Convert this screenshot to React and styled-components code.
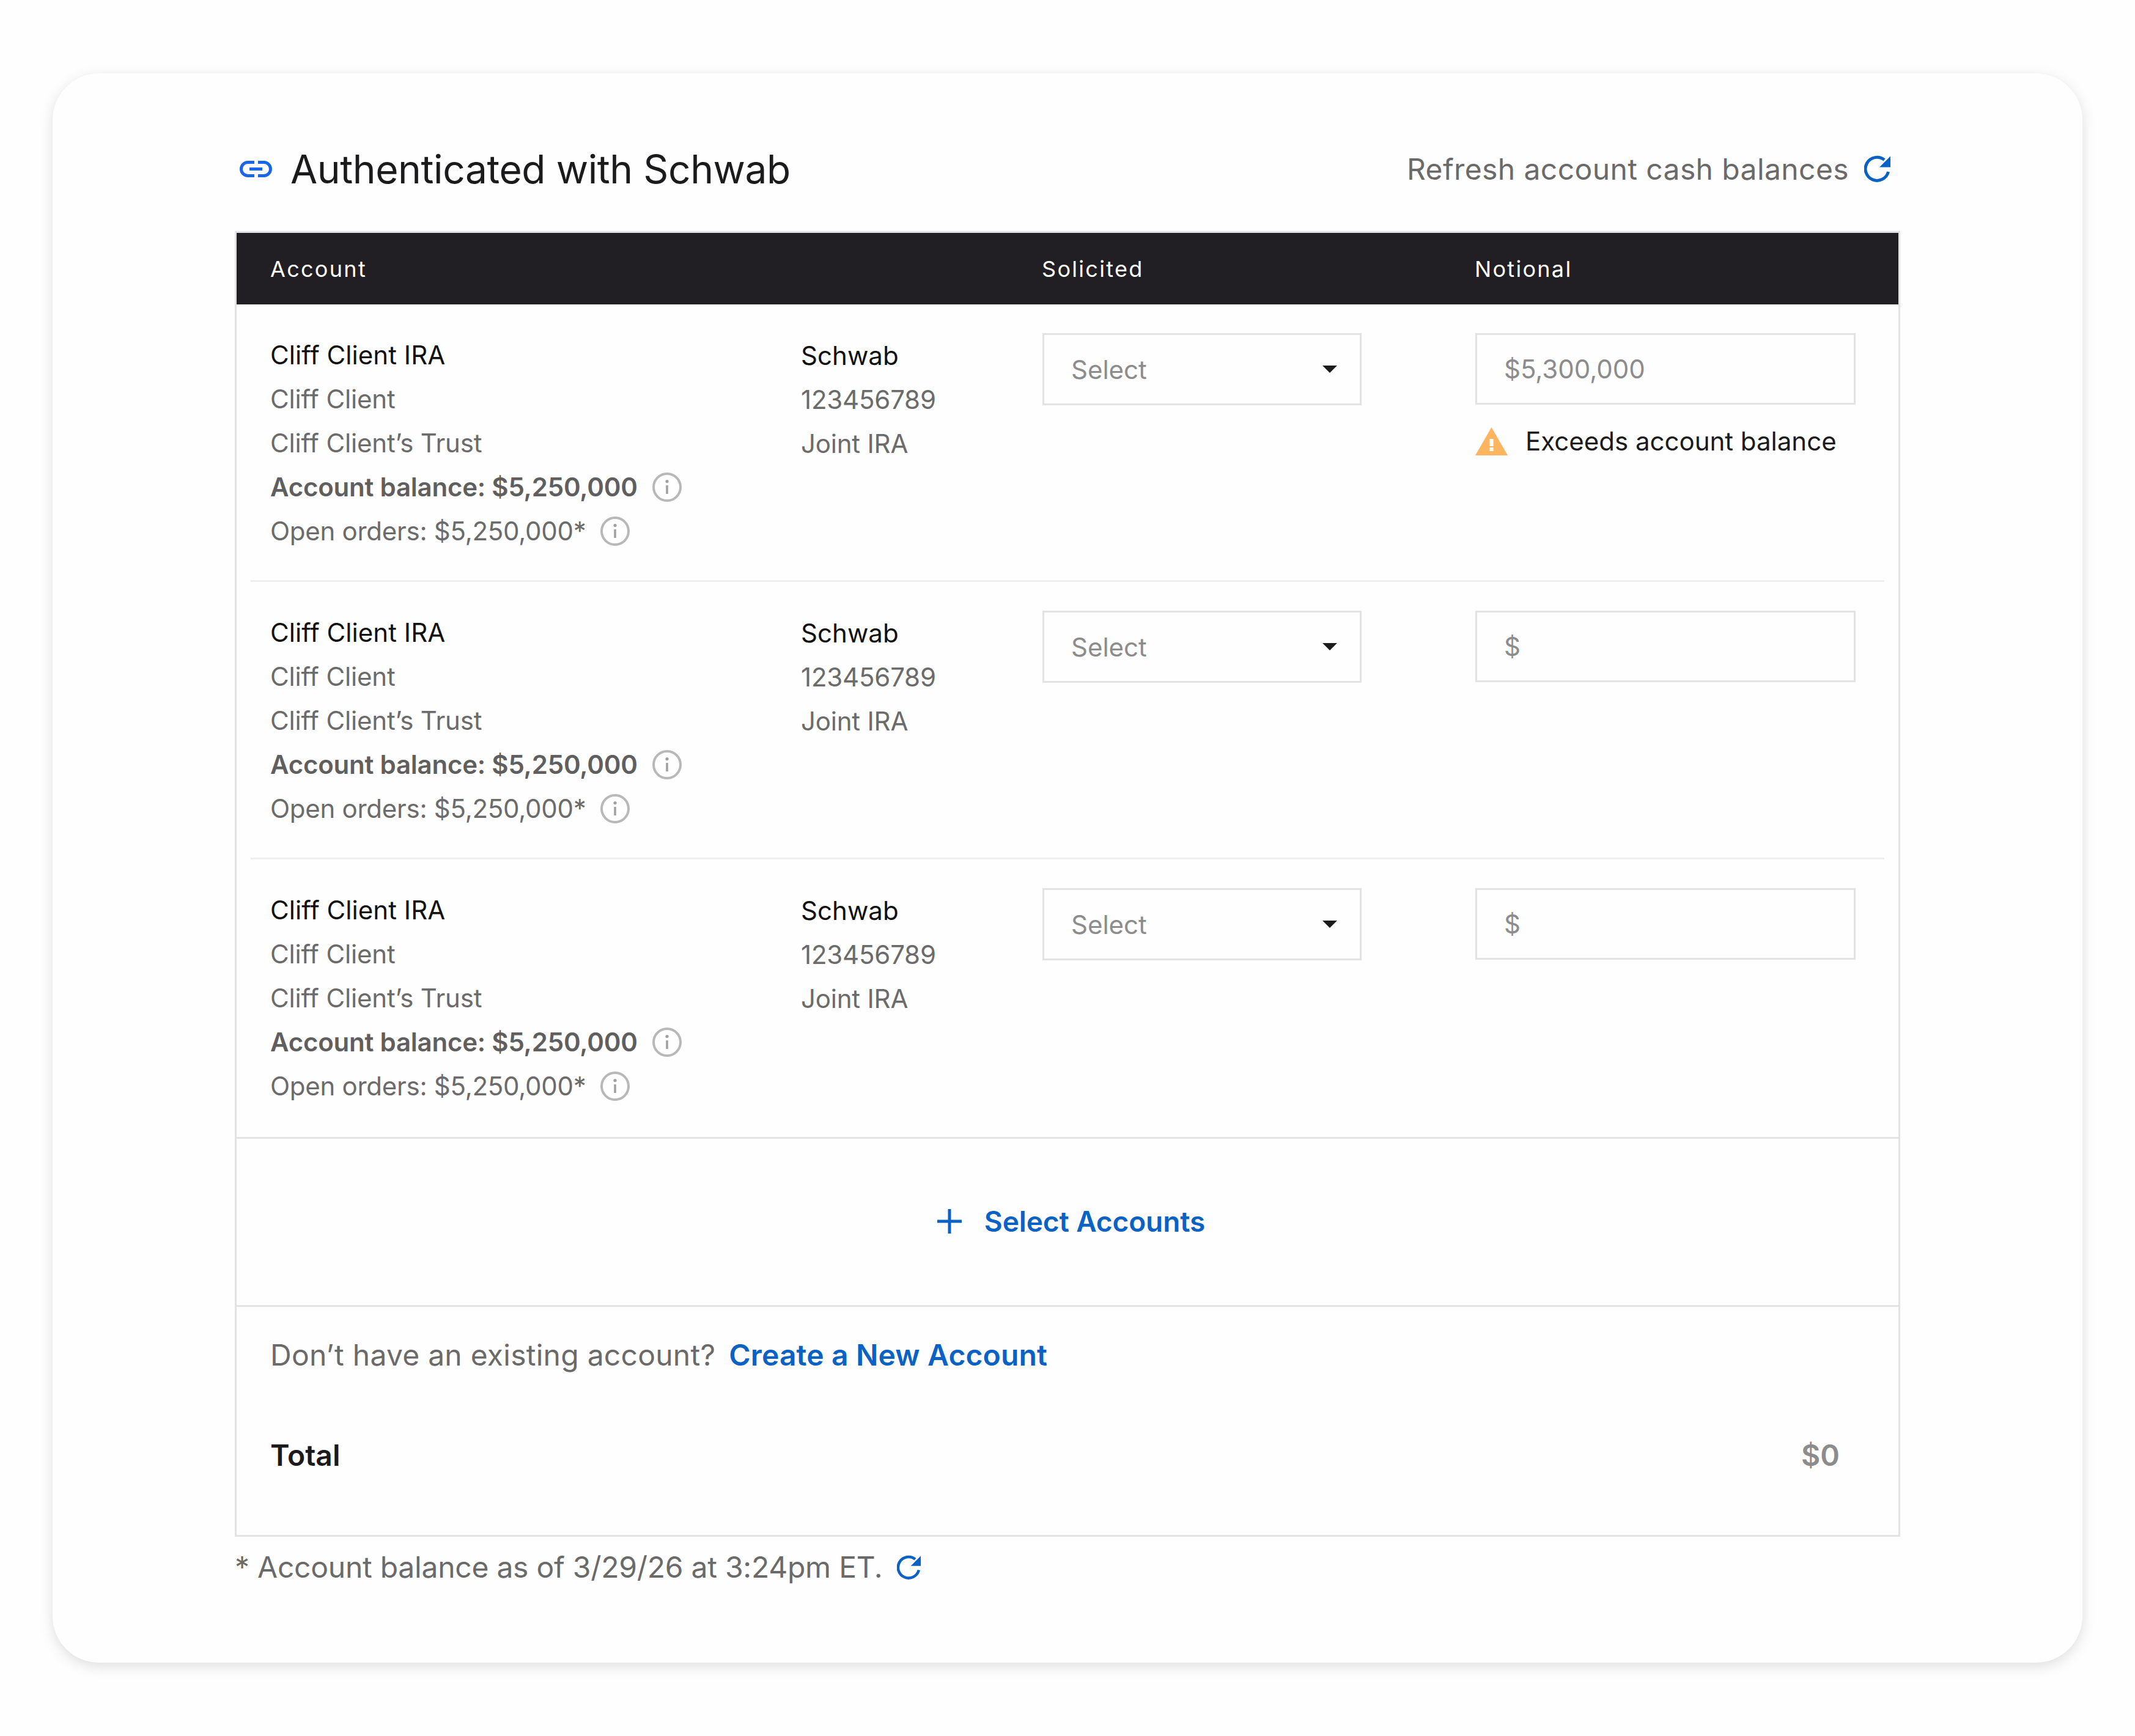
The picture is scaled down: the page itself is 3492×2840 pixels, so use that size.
import styled, { createGlobalStyle } from "styled-components";

const GlobalStyle = createGlobalStyle`
  html, body {
    margin: 0;
    padding: 0;
    background: #fefefe;
  }
  * {
    box-sizing: border-box;
  }
  body {
    font-family: Inter, "Liberation Sans", sans-serif;
  }
`;

const BLUE = "#0a62c4";

const rows = [
  { notional: "$5,300,000", warning: true },
  { notional: "$" },
  { notional: "$" },
];

const LinkIcon = () => (
  <svg width="53" height="27" viewBox="0 0 53 27" fill="none" stroke="#1a66e8" strokeWidth="5">
    <path d="M24 2.5H13.5a11 11 0 0 0 0 22H24" />
    <path d="M30 2.5H39.5a11 11 0 0 1 0 22H30" />
    <path d="M16 13.5H37" />
  </svg>
);

const RefreshIcon = ({ size = 44 }) => (
  <svg width={size} height={size} viewBox="0 0 44 42" fill="none">
    <path d="M33 6.5A19 19 0 1 0 39.5 26" stroke={BLUE} strokeWidth="5" />
    <path d="M43 .5V18.5H25Z" fill={BLUE} />
  </svg>
);

const InfoIcon = () => (
  <svg width="48" height="48" viewBox="0 0 48 48" fill="none">
    <circle cx="24" cy="24" r="22" stroke="#b8b8b8" strokeWidth="4" />
    <circle cx="24" cy="14.5" r="2.6" fill="#a0a0a0" />
    <path d="M24 21V35" stroke="#a0a0a0" strokeWidth="3.6" />
  </svg>
);

const WarningIcon = () => (
  <svg width="53" height="46" viewBox="0 0 53 46">
    <path d="M26.5 0L53 46H0Z" fill="#ffb45f" />
    <path d="M23.5 19h6v12h-6zM23.5 33h6v6h-6z" fill="#fff" />
  </svg>
);

const PlusIcon = () => (
  <svg width="40" height="40" viewBox="0 0 40 40" fill="none" stroke={BLUE} strokeWidth="5">
    <path d="M20 0V40M0 20H40" />
  </svg>
);

const App = () => {
  return (
    <Page>
      <GlobalStyle />
      <Card>
        <TopBar>
          <TitleWrap>
            <LinkIcon />
            <Title>Authenticated with Schwab</Title>
          </TitleWrap>
          <RefreshWrap>
            <span>Refresh account cash balances</span>
            <RefreshIcon />
          </RefreshWrap>
        </TopBar>
        <Table>
          <HeaderRow>
            <span>Account</span>
            <span>Solicited</span>
            <span>Notional</span>
          </HeaderRow>
          {rows.map((row, i) => (
            <Row key={i} $last={i === rows.length - 1}>
              <Cell>
                <Name>Cliff Client IRA</Name>
                <Line>Cliff Client</Line>
                <Line>Cliff Client’s Trust</Line>
                <BalanceLine>
                  Account balance: $5,250,000
                  <InfoIcon />
                </BalanceLine>
                <OrdersLine>
                  Open orders: $5,250,000*
                  <InfoIcon />
                </OrdersLine>
              </Cell>
              <BrokerCell>
                <Name>Schwab</Name>
                <Line>123456789</Line>
                <Line>Joint IRA</Line>
              </BrokerCell>
              <SelectBox>
                Select
                <Caret />
              </SelectBox>
              <div>
                <InputBox>{row.notional}</InputBox>
                {row.warning && (
                  <Warning>
                    <WarningIcon />
                    Exceeds account balance
                  </Warning>
                )}
              </div>
            </Row>
          ))}
          <AddSection>
            <PlusIcon />
            Select Accounts
          </AddSection>
          <Footer>
            <NewAccount>
              Don’t have an existing account?
              <NewLink>Create a New Account</NewLink>
            </NewAccount>
            <TotalRow>
              <strong>Total</strong>
              <TotalValue>$0</TotalValue>
            </TotalRow>
          </Footer>
        </Table>
        <Footnote>
          * Account balance as of 3/29/26 at 3:24pm ET.
          <RefreshIcon size={40} />
        </Footnote>
      </Card>
    </Page>
  );
};

const Page = styled.div`
  width: 3492px;
  height: 2840px;
  padding: 120px 86px 0;
`;

const Card = styled.div`
  width: 3320px;
  height: 2600px;
  padding: 100px 298px 0;
  background: #fefefe;
  border-radius: 76px;
  box-shadow: 0 6px 22px rgba(0, 0, 0, 0.13);
`;

const TopBar = styled.div`
  display: flex;
  justify-content: space-between;
  align-items: center;
  height: 112px;
  margin-bottom: 46px;
  padding: 0 15px 0 8px;
`;

const TitleWrap = styled.div`
  display: flex;
  align-items: center;
  gap: 30px;
`;

const Title = styled.h1`
  margin: 0;
  font-size: 64px;
  font-weight: 400;
  letter-spacing: -0.4px;
  color: #1b1a1d;
`;

const RefreshWrap = styled.div`
  display: flex;
  align-items: center;
  gap: 25px;
  font-size: 48px;
  letter-spacing: 0.4px;
  color: #6a6a6a;
`;

const Table = styled.div`
  width: 2724px;
  height: 2136px;
  border: 3px solid #e3e3e3;
`;

const HeaderRow = styled.div`
  display: grid;
  grid-template-columns: 1262px 708px 1fr;
  align-items: center;
  height: 117px;
  padding-left: 55px;
  background: #211f24;
  color: #fff;
  font-size: 36px;
  letter-spacing: 2.3px;
`;

const Row = styled.div`
  display: grid;
  grid-template-columns: 868px 395px 708px 1fr;
  align-items: start;
  height: 454px;
  margin: 0 23px;
  padding: 47px 0 0 32px;
  border-bottom: ${(props) => (props.$last ? "none" : "3px solid #efefef")};
`;

const Cell = styled.div`
  display: flex;
  flex-direction: column;
  font-size: 42px;
  line-height: 72px;
  letter-spacing: -0.15px;
`;

const BrokerCell = styled(Cell)`
  margin-top: 1px;
  letter-spacing: -0.2px;
`;

const Name = styled.div`
  color: #111;
  letter-spacing: 0.05px;
`;

const Line = styled.div`
  color: #6b6b6b;
`;

const BalanceLine = styled.div`
  display: flex;
  align-items: center;
  gap: 24px;
  color: #5f5f5f;
  font-weight: 600;
  letter-spacing: -0.22px;
`;

const OrdersLine = styled(BalanceLine)`
  color: #6b6b6b;
  font-weight: 400;
  letter-spacing: -0.27px;
`;

const SelectBox = styled.div`
  display: flex;
  align-items: center;
  justify-content: space-between;
  width: 522px;
  height: 118px;
  padding: 0 37px 0 44px;
  border: 3px solid #e3e3e3;
  font-size: 42px;
  color: #8c8c8c;
`;

const Caret = styled.span`
  width: 0;
  height: 0;
  border-left: 12px solid transparent;
  border-right: 12px solid transparent;
  border-top: 12px solid #1b1a1d;
`;

const InputBox = styled.div`
  display: flex;
  align-items: center;
  width: 622px;
  height: 117px;
  padding-left: 44px;
  border: 3px solid #e3e3e3;
  font-size: 42px;
  color: #8c8c8c;
`;

const Warning = styled.div`
  display: flex;
  align-items: center;
  gap: 29px;
  margin-top: 34px;
  font-size: 42px;
  color: #1b1a1d;
`;

const AddSection = styled.div`
  display: flex;
  align-items: center;
  justify-content: center;
  gap: 37px;
  height: 278px;
  padding: 0 0 2px 12px;
  border-top: 3px solid #e3e3e3;
  border-bottom: 3px solid #e3e3e3;
  font-size: 46px;
  font-weight: 600;
  letter-spacing: -0.1px;
  color: ${BLUE};
`;

const Footer = styled.div`
  padding: 43px 96px 0 55px;
`;

const NewAccount = styled.div`
  display: flex;
  gap: 22px;
  font-size: 48px;
  line-height: 72px;
  letter-spacing: 0.25px;
  color: #6a6a6a;
`;

const NewLink = styled.span`
  color: ${BLUE};
  font-weight: 600;
  letter-spacing: 0.15px;
`;

const TotalRow = styled.div`
  display: flex;
  justify-content: space-between;
  margin-top: 92px;
  font-size: 48px;
  line-height: 72px;
  color: #1b1a1d;

  strong {
    font-weight: 600;
  }
`;

const TotalValue = styled.span`
  color: #8c8c8c;
  font-weight: 600;
`;

const Footnote = styled.div`
  display: flex;
  align-items: center;
  gap: 24px;
  margin-top: 14px;
  font-size: 48px;
  line-height: 72px;
  letter-spacing: -0.25px;
  color: #6a6a6a;
`;

export default App;
